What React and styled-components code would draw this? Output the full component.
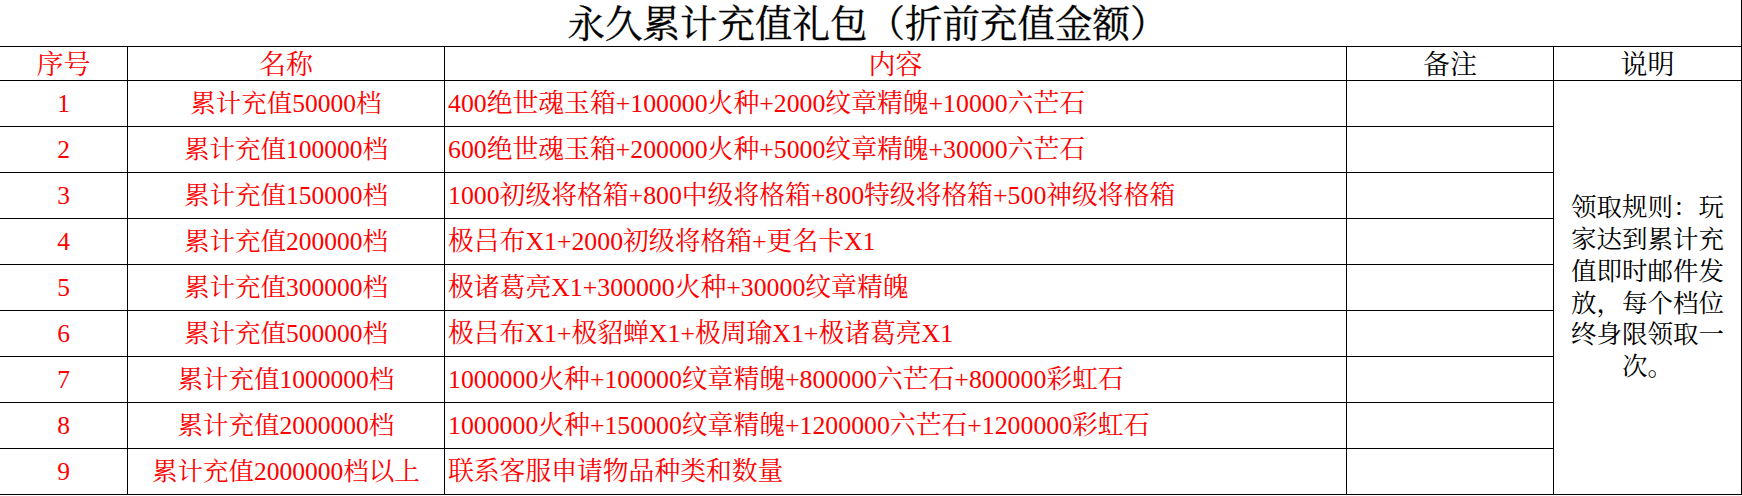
import React from "react";
import styled, { createGlobalStyle } from "styled-components";

const GlobalStyle = createGlobalStyle`
	body {
		margin: 0;
		background: #fff;
	}
	* {
		box-sizing: border-box;
	}
`;

const FONT = `"Liberation Serif", "Noto Serif CJK SC", "Noto Sans CJK SC", serif`;

const rows = [
	["累计充值50000档", "400绝世魂玉箱+100000火种+2000纹章精魄+10000六芒石"],
	["累计充值100000档", "600绝世魂玉箱+200000火种+5000纹章精魄+30000六芒石"],
	["累计充值150000档", "1000初级将格箱+800中级将格箱+800特级将格箱+500神级将格箱"],
	["累计充值200000档", "极吕布X1+2000初级将格箱+更名卡X1"],
	["累计充值300000档", "极诸葛亮X1+300000火种+30000纹章精魄"],
	["累计充值500000档", "极吕布X1+极貂蝉X1+极周瑜X1+极诸葛亮X1"],
	["累计充值1000000档", "1000000火种+100000纹章精魄+800000六芒石+800000彩虹石"],
	["累计充值2000000档", "1000000火种+150000纹章精魄+1200000六芒石+1200000彩虹石"],
	["累计充值2000000档以上", "联系客服申请物品种类和数量"],
];

const App = () => {
	return (
		<Wrapper>
			<GlobalStyle />
			<Title>永久累计充值礼包（折前充值金额）</Title>
			<Sheet>
				<HeadCell $red>序号</HeadCell>
				<HeadCell $red>名称</HeadCell>
				<HeadCell $red>内容</HeadCell>
				<HeadCell>备注</HeadCell>
				<HeadCell>说明</HeadCell>
				{rows.map(([name, content], i) => (
					<React.Fragment key={i}>
						<Cell>{i + 1}</Cell>
						<Cell>{name}</Cell>
						<Cell $left>{content}</Cell>
						<Cell />
						{i === 0 && (
							<NoteCell>
								领取规则：玩家达到累计充值即时邮件发放，每个档位终身限领取一次。
							</NoteCell>
						)}
					</React.Fragment>
				))}
			</Sheet>
		</Wrapper>
	);
};

const Wrapper = styled.section`
	width: 1742px;
	font-family: ${FONT};
`;

const Title = styled.h1`
	margin: 0;
	height: 46px;
	display: flex;
	align-items: center;
	justify-content: center;
	padding-right: 6px;
	padding-top: 4px;
	border-right: 1px solid #000;
	font-size: 37.5px;
	font-weight: normal;
	line-height: 1;
	color: #000;
	-webkit-text-stroke: 0.3px #000;
`;

const Sheet = styled.div`
	display: grid;
	grid-template-columns: 128px 317px 902px 207px 188px;
	grid-template-rows: 34px repeat(9, 46px);
	border-top: 1px solid #000;
`;

const Cell = styled.div`
	display: flex;
	align-items: center;
	justify-content: ${(p) => (p.$left ? "flex-start" : "center")};
	padding: ${(p) => (p.$left ? "0 0 0 3px" : "0")};
	border-right: 1px solid #000;
	border-bottom: 1px solid #000;
	font-size: ${(p) => (p.$left ? "25.8px" : "25.5px")};
	line-height: 1;
	color: #f00;
	white-space: nowrap;
`;

const HeadCell = styled(Cell)`
	justify-content: center;
	padding: 4px 0 0;
	font-size: 27px;
	color: ${(p) => (p.$red ? "#f00" : "#000")};
`;

const NoteCell = styled.div`
	grid-column: 5;
	grid-row: 2 / span 9;
	display: flex;
	align-items: center;
	justify-content: center;
	padding: 0 11px;
	border-right: 1px solid #000;
	border-bottom: 1px solid #000;
	font-size: 25.5px;
	line-height: 31.7px;
	text-align: center;
	color: #000;
`;

export default App;
